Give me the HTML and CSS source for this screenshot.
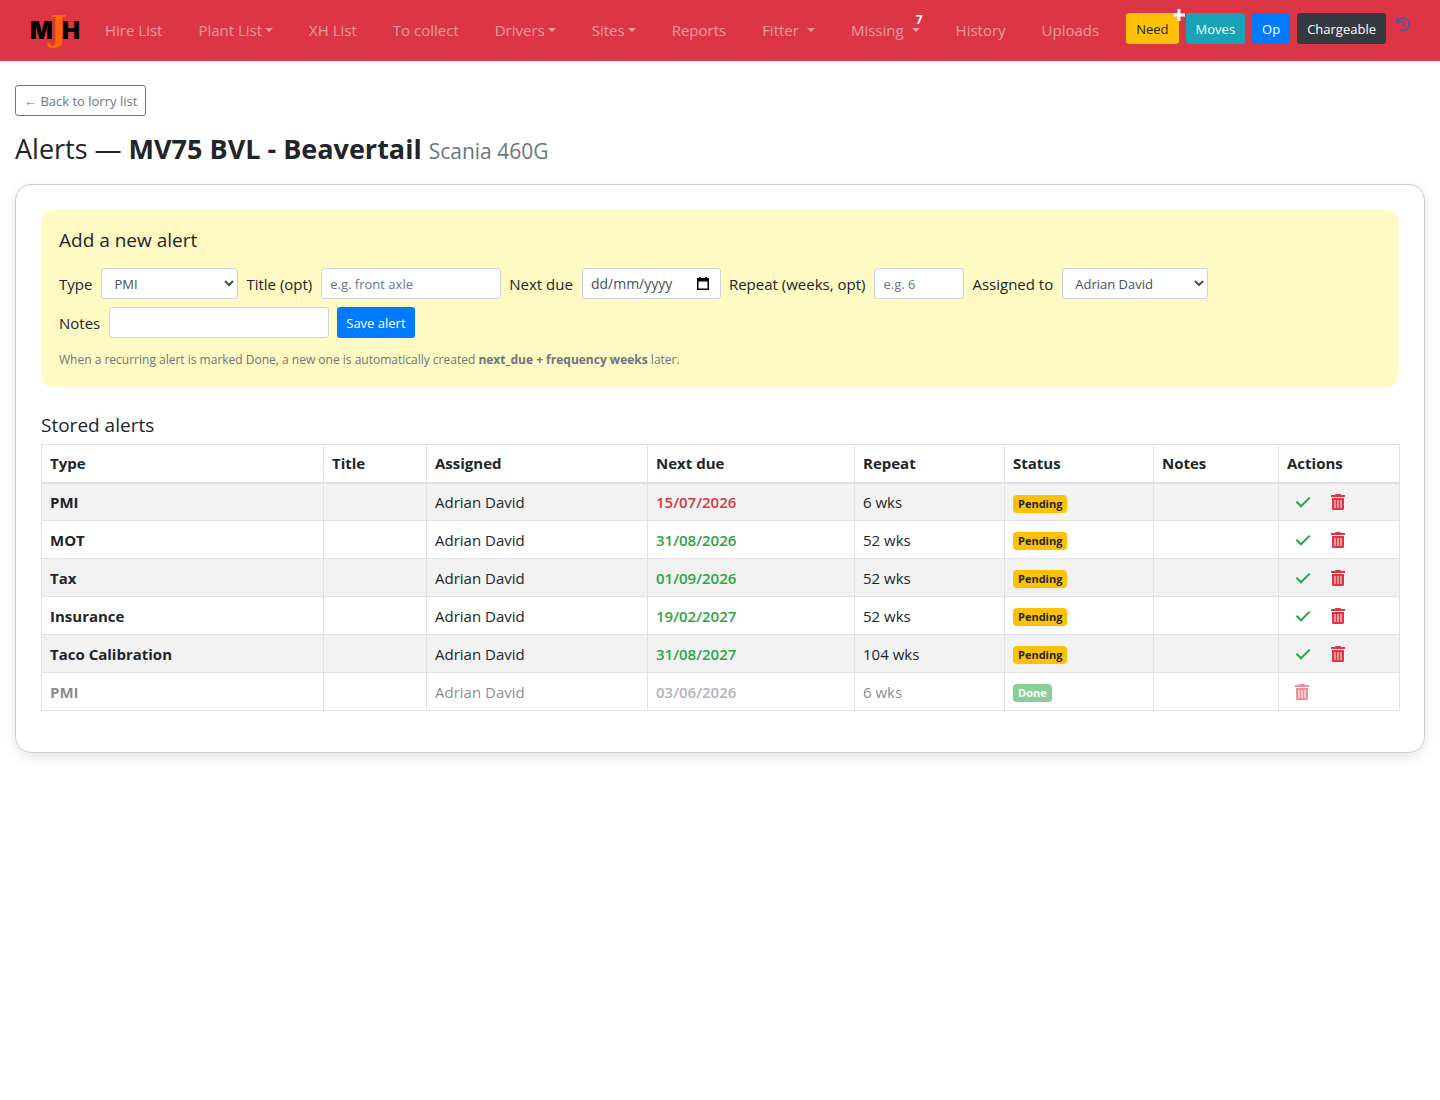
FILE: index.html
```html
<!DOCTYPE html>
<html lang="en-GB">
<head>
    <meta charset="UTF-8">
    <meta name="viewport" content="width=device-width, initial-scale=1.0">
    <title>Alerts - MV75 BVL</title>
    <link rel="stylesheet" href="styles.css">
</head>
<body>

    <!-- Icons used more than once -->
    <svg class="sprite" aria-hidden="true">
        <symbol id="icon-check" viewBox="0 0 16 16">
            <path d="M1.500 7.800 6 12.300 14.700 3.600" fill="none" stroke="currentColor" stroke-width="2"/>
        </symbol>
        <symbol id="icon-trash" viewBox="0 0 14 16">
            <path fill="currentColor" fill-rule="evenodd" d="M4.500 0h5l.6 1H14v2H0V1h3.900zM1 4h12v10.500a1.500 1.500 0 0 1-1.500 1.500h-9A1.500 1.500 0 0 1 1 14.500zM3.500 6v8h1V6zM6.500 6v8h1V6zM9.500 6v8h1V6z"/>
        </symbol>
    </svg>

    <!-- Navbar -->
    <nav class="navbar">
        <a href="#" class="brand" aria-label="MJH">
            <svg width="52" height="46" viewBox="0 0 52 46">
                <text class="logo-dark" x="0" y="31">M</text>
                <text class="logo-dark" x="32" y="31">H</text>
                <text class="logo-accent" x="20" y="33">J</text>
            </svg>
        </a>
        <ul class="nav-list">
            <li><a href="#">Hire List</a></li>
            <li><a href="#" class="dropdown">Plant List</a></li>
            <li><a href="#">XH List</a></li>
            <li><a href="#">To collect</a></li>
            <li><a href="#" class="dropdown">Drivers</a></li>
            <li><a href="#" class="dropdown">Sites</a></li>
            <li><a href="#">Reports</a></li>
            <li><a href="#" class="dropdown spaced">Fitter</a></li>
            <li><a href="#" class="dropdown spaced">Missing<span class="count">7</span></a></li>
            <li><a href="#">History</a></li>
            <li><a href="#">Uploads</a></li>
        </ul>
        <div class="nav-buttons">
            <button type="button" class="btn btn-warning">Need
                <svg class="plus" width="12" height="12" viewBox="0 0 12 12"><path d="M6 0v12M0 6h12" stroke="#fff" stroke-width="3"/></svg>
            </button>
            <button type="button" class="btn btn-info">Moves</button>
            <button type="button" class="btn btn-primary">Op</button>
            <button type="button" class="btn btn-dark">Chargeable</button>
            <a href="#" class="history-link" aria-label="Recent">
                <svg width="14" height="14" viewBox="0 0 14 14" fill="none" stroke="currentColor" stroke-width="1.500">
                    <path d="M2 4.500A6 6 0 1 1 3 11.500"/>
                    <path d="M1 .5v4.500h4.500"/>
                    <path d="M7.500 3.500V7.500l2.500 1.500"/>
                </svg>
            </a>
        </div>
    </nav>

    <main class="container">
        <a href="#" class="btn btn-outline">&larr; Back to lorry list</a>
        <h1>Alerts &mdash; <strong>MV75 BVL - Beavertail</strong> <small>Scania 460G</small></h1>

        <div class="card">
            <!-- New alert form -->
            <section class="add-alert">
                <h2>Add a new alert</h2>
                <form class="alert-form">
                    <div class="field">
                        <label for="type">Type</label>
                        <select id="type" class="w-type">
                            <option>PMI</option>
                            <option>MOT</option>
                            <option>Tax</option>
                            <option>Insurance</option>
                            <option>Taco Calibration</option>
                        </select>
                    </div>
                    <div class="field">
                        <label for="title">Title (opt)</label>
                        <input type="text" id="title" class="w-title" placeholder="e.g. front axle">
                    </div>
                    <div class="field">
                        <label for="nextDue">Next due</label>
                        <div class="date-box">
                            <input type="text" id="nextDue" placeholder="dd/mm/yyyy">
                            <button type="button" aria-label="Pick a date">
                                <svg width="12" height="13" viewBox="0 0 12 13"><path fill="#000" fill-rule="evenodd" d="M2 0h1.500v1h5V0H10v1h2v12H0V1h2zM1.500 4.500v7h9v-7z"/></svg>
                            </button>
                        </div>
                    </div>
                    <div class="field">
                        <label for="repeat">Repeat (weeks, opt)</label>
                        <input type="text" id="repeat" class="w-repeat" placeholder="e.g. 6">
                    </div>
                    <div class="field">
                        <label for="assigned">Assigned to</label>
                        <select id="assigned" class="w-assigned">
                            <option>Adrian David</option>
                        </select>
                    </div>
                    <div class="field">
                        <label for="notes">Notes</label>
                        <input type="text" id="notes" class="w-notes">
                    </div>
                    <button type="submit" class="btn btn-primary">Save alert</button>
                </form>
                <p class="hint">When a recurring alert is marked Done, a new one is automatically created <strong>next_due + frequency weeks</strong> later.</p>
            </section>

            <!-- Stored alerts -->
            <h2>Stored alerts</h2>
            <table class="alerts">
                <colgroup>
                    <col class="c-type"><col class="c-title"><col class="c-assigned"><col class="c-due">
                    <col class="c-repeat"><col class="c-status"><col class="c-notes"><col class="c-actions">
                </colgroup>
                <thead>
                    <tr>
                        <th>Type</th>
                        <th>Title</th>
                        <th>Assigned</th>
                        <th>Next due</th>
                        <th>Repeat</th>
                        <th>Status</th>
                        <th>Notes</th>
                        <th>Actions</th>
                    </tr>
                </thead>
                <tbody>
                    <tr>
                        <td><strong>PMI</strong></td>
                        <td></td>
                        <td>Adrian David</td>
                        <td class="due overdue">15/07/2026</td>
                        <td>6 wks</td>
                        <td><span class="badge pending">Pending</span></td>
                        <td></td>
                        <td><div class="actions">
                            <button type="button" class="done-btn" aria-label="Mark done"><svg width="16" height="16"><use href="#icon-check"/></svg></button>
                            <button type="button" class="delete-btn" aria-label="Delete"><svg width="14" height="16"><use href="#icon-trash"/></svg></button>
                        </div></td>
                    </tr>
                    <tr>
                        <td><strong>MOT</strong></td>
                        <td></td>
                        <td>Adrian David</td>
                        <td class="due">31/08/2026</td>
                        <td>52 wks</td>
                        <td><span class="badge pending">Pending</span></td>
                        <td></td>
                        <td><div class="actions">
                            <button type="button" class="done-btn" aria-label="Mark done"><svg width="16" height="16"><use href="#icon-check"/></svg></button>
                            <button type="button" class="delete-btn" aria-label="Delete"><svg width="14" height="16"><use href="#icon-trash"/></svg></button>
                        </div></td>
                    </tr>
                    <tr>
                        <td><strong>Tax</strong></td>
                        <td></td>
                        <td>Adrian David</td>
                        <td class="due">01/09/2026</td>
                        <td>52 wks</td>
                        <td><span class="badge pending">Pending</span></td>
                        <td></td>
                        <td><div class="actions">
                            <button type="button" class="done-btn" aria-label="Mark done"><svg width="16" height="16"><use href="#icon-check"/></svg></button>
                            <button type="button" class="delete-btn" aria-label="Delete"><svg width="14" height="16"><use href="#icon-trash"/></svg></button>
                        </div></td>
                    </tr>
                    <tr>
                        <td><strong>Insurance</strong></td>
                        <td></td>
                        <td>Adrian David</td>
                        <td class="due">19/02/2027</td>
                        <td>52 wks</td>
                        <td><span class="badge pending">Pending</span></td>
                        <td></td>
                        <td><div class="actions">
                            <button type="button" class="done-btn" aria-label="Mark done"><svg width="16" height="16"><use href="#icon-check"/></svg></button>
                            <button type="button" class="delete-btn" aria-label="Delete"><svg width="14" height="16"><use href="#icon-trash"/></svg></button>
                        </div></td>
                    </tr>
                    <tr>
                        <td><strong>Taco Calibration</strong></td>
                        <td></td>
                        <td>Adrian David</td>
                        <td class="due">31/08/2027</td>
                        <td>104 wks</td>
                        <td><span class="badge pending">Pending</span></td>
                        <td></td>
                        <td><div class="actions">
                            <button type="button" class="done-btn" aria-label="Mark done"><svg width="16" height="16"><use href="#icon-check"/></svg></button>
                            <button type="button" class="delete-btn" aria-label="Delete"><svg width="14" height="16"><use href="#icon-trash"/></svg></button>
                        </div></td>
                    </tr>
                    <tr class="completed">
                        <td><strong>PMI</strong></td>
                        <td></td>
                        <td>Adrian David</td>
                        <td class="due">03/06/2026</td>
                        <td>6 wks</td>
                        <td><span class="badge done">Done</span></td>
                        <td></td>
                        <td><div class="actions">
                            <button type="button" class="delete-btn" aria-label="Delete"><svg width="14" height="16"><use href="#icon-trash"/></svg></button>
                        </div></td>
                    </tr>
                </tbody>
            </table>
        </div>
    </main>

</body>
</html>
```
FILE: styles.css
```css
* {
    box-sizing: border-box;
}

body {
    margin: 0;
    font-family: 'Open Sans', 'Noto Sans', sans-serif;
    font-size: 15px;
    line-height: 24px;
    color: #212529;
    background: #fff;
}

svg {
    display: block;
}

.sprite {
    display: none;
}

/* Navbar */
.navbar {
    display: flex;
    align-items: center;
    min-height: 61px;
    padding: 0 30px;
    background: #dc3545;
}

.brand {
    margin-right: 23px;
}

.brand svg {
    overflow: visible;
}

.logo-dark {
    font-family: Inter, sans-serif;
    font-size: 24px;
    font-weight: 900;
    fill: #000;
}

.logo-accent {
    font-family: 'DejaVu Serif', serif;
    font-size: 35px;
    font-weight: 700;
    fill: #ff6a00;
}

.nav-list {
    display: flex;
    flex: 1;
    justify-content: space-between;
    margin: 0 27px 2px 0;
    padding: 0;
    list-style: none;
}

.nav-list a {
    position: relative;
    color: rgba(255, 255, 255, 0.5);
    text-decoration: none;
    white-space: nowrap;
}

.nav-list a:hover {
    color: rgba(255, 255, 255, 0.75);
}

.dropdown::after {
    content: "";
    display: inline-block;
    margin-left: 3px;
    vertical-align: 4px;
    border-top: 4px solid;
    border-left: 4px solid transparent;
    border-right: 4px solid transparent;
}

.dropdown.spaced::after {
    margin-left: 8px;
}

.count {
    position: absolute;
    top: -12px;
    right: -3px;
    font-size: 12px;
    font-weight: 700;
    color: #fff;
}

.nav-buttons {
    display: flex;
    gap: 7px;
    margin-bottom: 4px;
}

.plus {
    position: absolute;
    top: -5px;
    right: -7px;
}

.history-link {
    padding-top: 4px;
    margin-left: 3px;
    color: #3a5fad;
}

/* Buttons */
.btn {
    position: relative;
    display: inline-block;
    height: 31px;
    padding: 0 9px;
    border: 1px solid transparent;
    border-radius: 3px;
    font-family: inherit;
    font-size: 13px;
    line-height: 30px;
    color: #fff;
    text-decoration: none;
    white-space: nowrap;
    cursor: pointer;
}

.btn-warning {
    background: #ffc107;
    color: #212529;
}

.btn-info {
    background: #17a2b8;
}

.btn-primary {
    background: #007bff;
}

.btn-dark {
    background: #343a40;
}

.btn-outline {
    padding: 0 8px;
    border-color: #6c757d;
    color: #6c757d;
}

.alert-form .btn {
    padding: 0 8px;
}

/* Page */
.container {
    padding: 24px 15px;
}

h1 {
    margin: 16px 0;
    font-size: 27px;
    font-weight: 500;
    line-height: 34px;
}

h1 small {
    font-size: 21px;
    font-weight: 400;
    color: #6c757d;
}

h2 {
    margin: 0;
    font-size: 19px;
    font-weight: 500;
    line-height: 24px;
}

strong, th {
    font-weight: 700;
}

.card {
    padding: 25px 25px 41px;
    border: 1px solid #ccc;
    border-radius: 16px;
    box-shadow: 0 4px 12px rgba(0, 0, 0, 0.1);
}

/* New alert form */
.add-alert {
    margin-bottom: 26px;
    padding: 18px;
    border-radius: 12px;
    background: #fff9c4;
}

.alert-form {
    display: flex;
    flex-wrap: wrap;
    gap: 8px;
    margin-top: 16px;
}

.field {
    display: flex;
    align-items: center;
    gap: 9px;
}

.field input, .field select {
    height: 31px;
    padding: 0 8px;
    border: 1px solid #ced4da;
    border-radius: 3px;
    background: #fff;
    font-family: inherit;
    font-size: 13px;
    color: #495057;
}

.field input::placeholder {
    color: #6c757d;
    opacity: 1;
}

.w-type {
    width: 137px;
}

.w-title {
    width: 180px;
}

.w-repeat {
    width: 90px;
}

.w-assigned {
    width: 146px;
}

.w-notes {
    width: 220px;
}

.date-box {
    display: flex;
    align-items: center;
    width: 139px;
    border: 1px solid #ced4da;
    border-radius: 3px;
    background: #fff;
}

.field .date-box input {
    flex: 1;
    min-width: 0;
    height: 29px;
    border: 0;
    font-size: 14px;
}

.date-box input::placeholder {
    color: #495057;
}

.date-box button {
    padding: 0 11px 0 0;
    border: 0;
    background: none;
    cursor: pointer;
}

.hint {
    margin: 13px 0 0;
    font-size: 12px;
    line-height: 18px;
    color: #6c757d;
}

/* Stored alerts */
.alerts {
    width: 100%;
    margin-top: 7px;
    table-layout: fixed;
    border-collapse: collapse;
}

.alerts th, .alerts td {
    height: 38px;
    padding: 0 8px;
    border: 1px solid #dee2e6;
    text-align: left;
}

.alerts thead th {
    border-bottom-width: 2px;
}

.alerts tbody tr:nth-child(odd) {
    background: #f2f2f2;
}

.c-type { width: 282px; }
.c-title { width: 103px; }
.c-assigned { width: 221px; }
.c-due { width: 207px; }
.c-repeat { width: 150px; }
.c-status { width: 149px; }
.c-notes { width: 125px; }
.c-actions { width: 121px; }

.due {
    font-weight: 600;
    color: #28a745;
}

.overdue {
    color: #dc3545;
}

.badge {
    display: inline-block;
    padding: 0 5px;
    border-radius: 4px;
    font-size: 11px;
    font-weight: 700;
    line-height: 18px;
    vertical-align: middle;
}

.pending {
    background: #ffc107;
    color: #212529;
}

.done {
    background: #28a745;
    color: #fff;
}

.actions {
    display: flex;
    gap: 20px;
    padding-left: 8px;
}

.actions button {
    padding: 0;
    border: 0;
    background: none;
    cursor: pointer;
}

.done-btn {
    color: #28a745;
}

.delete-btn {
    color: #dc3545;
}

/* Completed rows are faded but keep their borders */
.completed td {
    color: rgba(33, 37, 41, 0.55);
}

.alerts .completed .due {
    color: #b0b4b8;
}

.completed .badge, .completed .delete-btn {
    opacity: 0.55;
}
```
